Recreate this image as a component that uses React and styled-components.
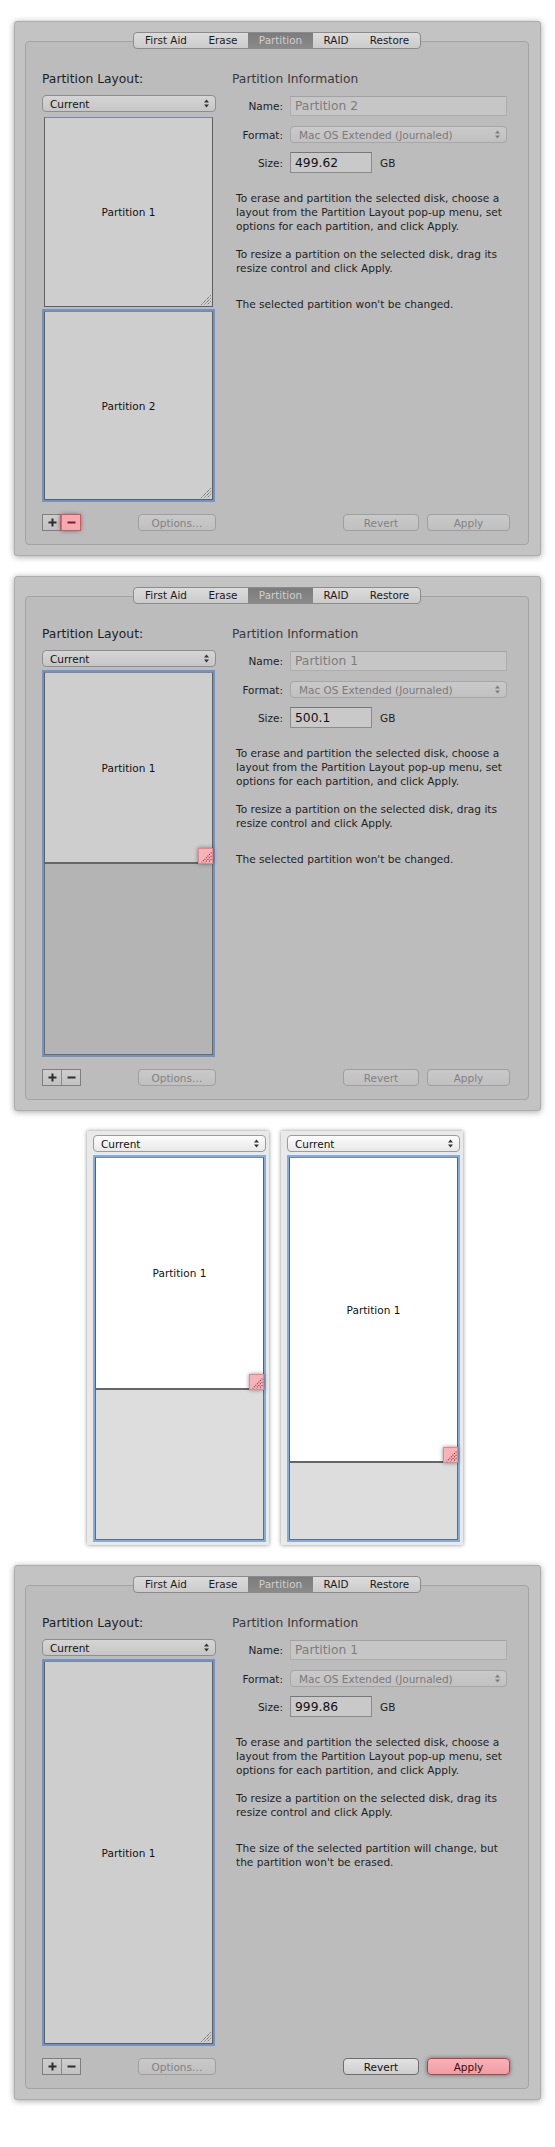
import React from "react";
import styled, { createGlobalStyle, css } from "styled-components";

const GlobalStyle = createGlobalStyle`
  html, body {
    margin: 0;
    padding: 0;
    background: #fff;
  }
  body {
    font-family: "DejaVu Sans", "Liberation Sans", sans-serif;
    color: #1d1d1d;
  }
`;

const Page = styled.div`
  width: 555px;
  padding: 21px 0 47px;
  display: flex;
  flex-direction: column;
  gap: 20px;
`;

const Window = styled.div`
  margin-left: 14px;
  width: 527px;
  box-sizing: border-box;
  background: #c3c3c3;
  border: 1px solid #acacac;
  border-radius: 3px;
  box-shadow: 0 1px 6px rgba(0, 0, 0, 0.35);
  padding: 10px 11px 10px 10px;
  display: flex;
  flex-direction: column;
`;

const Tabs = styled.div`
  align-self: center;
  position: relative;
  z-index: 1;
  display: flex;
  height: 17px;
  box-sizing: border-box;
  border: 1px solid #8b8b8b;
  border-radius: 4px;
  overflow: hidden;
  background: linear-gradient(#dcdcdc, #cbcbcb);
`;

const Tab = styled.div`
  position: relative;
  width: ${p => p.$w}px;
  text-align: center;
  font-size: 10.4px;
  line-height: 15px;
  color: ${p => (p.$active ? "#cfcfcf" : "#1a1a1a")};
  background: ${p => (p.$active ? "linear-gradient(#7c7c7c, #8a8a8a)" : "transparent")};
  & + &::before {
    content: "";
    position: absolute;
    left: 0;
    top: 3px;
    bottom: 3px;
    width: 1px;
    background: #a3a3a3;
  }
`;

const Group = styled.div`
  margin-top: -8px;
  border: 1px solid #a3a3a3;
  border-radius: 4px;
  background: #bcbcbc;
  padding: 29px 18px 13px 16px;
  display: grid;
  grid-template-columns: 174px 278px;
  column-gap: 16px;
`;

const Column = styled.div`
  display: flex;
  flex-direction: column;
`;

const Heading = styled.div`
  font-size: 12.3px;
  line-height: 16px;
  color: ${p => (p.$soft ? "#3a3a3a" : "#1e1e1e")};
  white-space: nowrap;
`;

const Popup = styled.div`
  height: 17px;
  box-sizing: border-box;
  margin-top: ${p => p.$mt ?? 8}px;
  border: 1px solid ${p => (p.$light ? "#9b9b9b" : "#8e8e8e")};
  border-radius: 4px;
  background: ${p =>
    p.$light ? "linear-gradient(#fdfdfd, #e8e8e8)" : "linear-gradient(#d5d5d5, #c6c6c6)"};
  display: flex;
  align-items: center;
  justify-content: space-between;
  padding: 0 6px 0 7px;
  font-size: 10.5px;
  color: #111;
`;

const FormatPopup = styled(Popup)`
  width: 217px;
  margin-top: 0;
  border-color: #a7a7a7;
  background: linear-gradient(#c9c9c9, #c1c1c1);
  color: #7b7b7b;
  padding-left: 8px;
`;

const Map = styled.div`
  margin: ${p => p.$mt ?? 5}px 0 0 2px;
  width: 169px;
  height: 383px;
  display: flex;
  flex-direction: column;
  gap: ${p => p.$gap || 0}px;
  box-shadow: ${p => (p.$outlined ? `0 0 0 2px ${p.$blue || "#7393c2"}` : "none")};
`;

const Part = styled.div`
  position: relative;
  flex: none;
  height: ${p => p.$h}px;
  box-sizing: border-box;
  background: ${p => p.$bg || "#cecece"};
  border: 1px solid #5f5f5f;
  border-top-color: #7a87a4;
  ${p =>
    p.$divider &&
    css`
      border-bottom: 2px solid #666;
    `}
  ${p =>
    p.$selected &&
    css`
      box-shadow: 0 0 0 2px #7393c2;
    `}
  display: flex;
  align-items: center;
  justify-content: center;
  font-size: 10.5px;
  color: #111;
`;

const Free = styled.div`
  flex: 1;
  background: ${p => p.$bg || "#b4b4b4"};
  border: 1px solid #6a6a6a;
  border-top: none;
`;

const GripSpot = styled.div`
  position: absolute;
  right: 1px;
  bottom: 1px;
  display: flex;
`;

const Handle = styled.div`
  position: absolute;
  right: -1px;
  bottom: -2px;
  width: 15px;
  height: 16px;
  box-sizing: border-box;
  background: #f7b4b8;
  border: 1px solid #d98a8e;
  box-shadow: 0 0 4px rgba(0, 0, 0, 0.45);
  display: flex;
  align-items: flex-end;
  justify-content: flex-end;
`;

const Footer = styled.div`
  margin-top: ${p => p.$mt ?? 14}px;
  height: 17px;
  display: flex;
  align-items: center;
  justify-content: ${p => (p.$end ? "flex-end" : "space-between")};
  gap: 8px;
`;

const ActionBar = styled(Footer)`
  margin-top: auto;
`;

const Segmented = styled.div`
  display: flex;
  height: 17px;
  box-sizing: border-box;
  border: 1px solid #7f7f7f;
  background: linear-gradient(#cdcdcd, #c2c2c2);
`;

const SegButton = styled.div`
  width: 18px;
  display: flex;
  align-items: center;
  justify-content: center;
  & + & {
    border-left: 1px solid #8a8a8a;
  }
  ${p =>
    p.$alert &&
    css`
      position: relative;
      background: #f4aab0;
      box-shadow: 0 0 0 1px #c35d63, 0 0 5px rgba(0, 0, 0, 0.6);
    `}
`;

const Button = styled.div`
  width: ${p => p.$w}px;
  height: 17px;
  box-sizing: border-box;
  border-radius: 4px;
  display: flex;
  align-items: center;
  justify-content: center;
  font-size: 10.5px;
  border: 1px solid #9f9f9f;
  background: linear-gradient(#c9c9c9, #c0c0c0);
  color: #828282;
  ${p =>
    p.$on &&
    css`
      border-color: #6d6d6d;
      background: linear-gradient(#e2e2e2, #cecece);
      color: #111;
    `}
  ${p =>
    p.$primary &&
    css`
      border-color: #a9454b;
      background: linear-gradient(#f7b2b7, #f29da3);
      color: #3a0d10;
      box-shadow: 0 0 4px rgba(0, 0, 0, 0.45);
    `}
`;

const Row = styled.div`
  display: flex;
  align-items: center;
  gap: 7px;
  margin-top: ${p => p.$mt}px;
`;

const Label = styled.div`
  width: 51px;
  text-align: right;
  font-size: 10.5px;
  color: #1e1e1e;
`;

const Field = styled.div`
  width: ${p => p.$w}px;
  height: ${p => p.$h}px;
  box-sizing: border-box;
  border: 1px solid ${p => (p.$muted ? "#adadad" : "#8c8c8c")};
  border-top-color: ${p => (p.$muted ? "#a2a2a2" : "#777")};
  background: ${p => (p.$muted ? "#c6c6c6" : "#c9c9c9")};
  padding-left: 4px;
  display: flex;
  align-items: center;
  font-size: 12.3px;
  color: ${p => (p.$muted ? "#7d7d7d" : "#111")};
`;

const Unit = styled.div`
  font-size: 10.5px;
  margin-left: 1px;
  color: #1e1e1e;
`;

const Note = styled.p`
  margin: ${p => p.$mt}px 0 0 4px;
  font-size: 10.6px;
  line-height: 14px;
  color: #1f1f1f;
  white-space: nowrap;
`;

const Strip = styled.div`
  display: flex;
  gap: 12px;
  margin-left: 87px;
`;

const MiniWindow = styled.div`
  width: 182px;
  box-sizing: border-box;
  padding: 4px 3px 5px 6px;
  background: #e9e9e9;
  box-shadow: 0 0 4px rgba(0, 0, 0, 0.45);
`;

function Arrows({ color = "#333" }) {
  return (
    <svg width="5" height="9" viewBox="0 0 5 9">
      <polygon points="0,3.5 2.5,0.5 5,3.5" fill={color} />
      <polygon points="0,5.5 2.5,8.5 5,5.5" fill={color} />
    </svg>
  );
}

function GripLines({ color = "#4a4a4a", size = 11 }) {
  return (
    <svg width={size} height={size} viewBox="0 0 11 11">
      <g stroke={color} strokeWidth="1" strokeDasharray="1 1">
        <line x1="10.5" y1="1.5" x2="1.5" y2="10.5" />
        <line x1="10.5" y1="4.5" x2="4.5" y2="10.5" />
        <line x1="10.5" y1="7.5" x2="7.5" y2="10.5" />
      </g>
    </svg>
  );
}

function Plus() {
  return (
    <svg width="9" height="9" viewBox="0 0 9 9">
      <path d="M4.5 0.5v8M0.5 4.5h8" stroke="#2e2e2e" strokeWidth="2" />
    </svg>
  );
}

function Minus({ color = "#2e2e2e" }) {
  return (
    <svg width="9" height="9" viewBox="0 0 9 9">
      <path d="M0.5 4.5h8" stroke={color} strokeWidth="2" />
    </svg>
  );
}

function PartitionMap({ parts, outlined, gap, blue, mt }) {
  return (
    <Map $outlined={outlined} $gap={gap} $blue={blue} $mt={mt}>
      {parts.map((p, i) =>
        p.free ? (
          <Free key={i} $bg={p.bg} />
        ) : (
          <Part
            key={i}
            $h={p.h}
            $bg={p.bg}
            $selected={p.selected}
            $divider={p.handle}
          >
            {p.label}
            {p.grip && (
              <GripSpot>
                <GripLines />
              </GripSpot>
            )}
            {p.handle && (
              <Handle>
                <GripLines color="#8a3036" size={12} />
              </Handle>
            )}
          </Part>
        )
      )}
    </Map>
  );
}

const tabs = [
  { name: "First Aid", w: 64 },
  { name: "Erase", w: 50 },
  { name: "Partition", w: 65, active: true },
  { name: "RAID", w: 46 },
  { name: "Restore", w: 61 },
];

function DiskPanel({ name, size, parts, outlined, gap, minusAlert, lastNote, canApply }) {
  return (
    <Window>
      <Tabs>
        {tabs.map(t => (
          <Tab key={t.name} $w={t.w} $active={t.active}>
            {t.name}
          </Tab>
        ))}
      </Tabs>
      <Group>
        <Column>
          <Heading>Partition Layout:</Heading>
          <Popup>
            <span>Current</span>
            <Arrows />
          </Popup>
          <PartitionMap parts={parts} outlined={outlined} gap={gap} />
          <Footer>
            <Segmented>
              <SegButton>
                <Plus />
              </SegButton>
              <SegButton $alert={minusAlert}>
                <Minus color={minusAlert ? "#7a1e24" : "#2e2e2e"} />
              </SegButton>
            </Segmented>
            <Button $w={78}>Options…</Button>
          </Footer>
        </Column>
        <Column>
          <Heading $soft>Partition Information</Heading>
          <Row $mt={9}>
            <Label>Name:</Label>
            <Field $w={217} $h={20} $muted>
              {name}
            </Field>
          </Row>
          <Row $mt={10}>
            <Label>Format:</Label>
            <FormatPopup>
              <span>Mac OS Extended (Journaled)</span>
              <Arrows color="#7d7d7d" />
            </FormatPopup>
          </Row>
          <Row $mt={9}>
            <Label>Size:</Label>
            <Field $w={82} $h={21}>
              {size}
            </Field>
            <Unit>GB</Unit>
          </Row>
          <Note $mt={18}>
            To erase and partition the selected disk, choose a<br />
            layout from the Partition Layout pop-up menu, set<br />
            options for each partition, and click Apply.
          </Note>
          <Note $mt={14}>
            To resize a partition on the selected disk, drag its<br />
            resize control and click Apply.
          </Note>
          <Note $mt={22}>
            {lastNote.map((line, i) => (
              <React.Fragment key={i}>
                {i > 0 && <br />}
                {line}
              </React.Fragment>
            ))}
          </Note>
          <ActionBar $end>
            <Button $w={76} $on={canApply}>
              Revert
            </Button>
            <Button $w={83} $primary={canApply}>
              Apply
            </Button>
          </ActionBar>
        </Column>
      </Group>
    </Window>
  );
}

function MiniPanel({ used }) {
  return (
    <MiniWindow>
      <Popup $light $mt={0}>
        <span>Current</span>
        <Arrows />
      </Popup>
      <PartitionMap
        outlined
        blue="#83addf"
        mt={5}
        parts={[
          { label: "Partition 1", h: used, bg: "#fff", handle: true },
          { free: true, bg: "#dddddd" },
        ]}
      />
    </MiniWindow>
  );
}

export default function App() {
  return (
    <>
      <GlobalStyle />
      <Page>
        <DiskPanel
          name="Partition 2"
          size="499.62"
          gap={4}
          minusAlert
          parts={[
            { label: "Partition 1", h: 190, grip: true },
            { label: "Partition 2", h: 189, grip: true, selected: true },
          ]}
          lastNote={["The selected partition won't be changed."]}
        />
        <DiskPanel
          name="Partition 1"
          size="500.1"
          outlined
          parts={[
            { label: "Partition 1", h: 192, handle: true },
            { free: true },
          ]}
          lastNote={["The selected partition won't be changed."]}
        />
        <Strip>
          <MiniPanel used={233} />
          <MiniPanel used={306} />
        </Strip>
        <DiskPanel
          name="Partition 1"
          size="999.86"
          outlined
          canApply
          parts={[{ label: "Partition 1", h: 383, grip: true }]}
          lastNote={[
            "The size of the selected partition will change, but",
            "the partition won't be erased.",
          ]}
        />
      </Page>
    </>
  );
}
